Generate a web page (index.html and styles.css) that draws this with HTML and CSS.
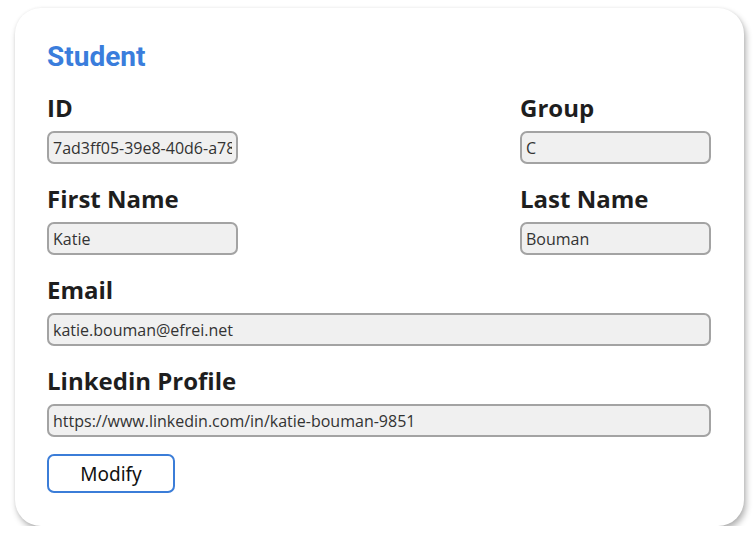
FILE: index.html
```html
<!DOCTYPE html>
<html>
<head>
<meta charset="utf-8">
<link rel="stylesheet" href="styles.css">
</head>
<body>
<div class="card">
  <h1 class="title">Student</h1>
  <div class="row">
    <div class="field">
      <label class="label">ID</label>
      <input class="input small" type="text" value="7ad3ff05-39e8-40d6-a78b-2c1f4e9d0a17" readonly>
    </div>
    <div class="field">
      <label class="label">Group</label>
      <input class="input small" type="text" value="C" readonly>
    </div>
  </div>
  <div class="row">
    <div class="field">
      <label class="label">First Name</label>
      <input class="input small" type="text" value="Katie" readonly>
    </div>
    <div class="field">
      <label class="label">Last Name</label>
      <input class="input small" type="text" value="Bouman" readonly>
    </div>
  </div>
  <div class="field">
    <label class="label">Email</label>
    <input class="input" type="text" value="katie.bouman@efrei.net" readonly>
  </div>
  <div class="field">
    <label class="label">Linkedin Profile</label>
    <input class="input" type="text" value="https://www.linkedin.com/in/katie-bouman-9851" readonly>
  </div>
  <button class="btn" type="button">Modify</button>
</div>
</body>
</html>
```
FILE: styles.css
```css
* { box-sizing: border-box; }
html, body { margin: 0; padding: 0; background: #ffffff; }
body { padding: 8px 0 0 15px; }
.card {
  width: 729px;
  height: 518px;
  background: #ffffff;
  border-radius: 26px;
  box-shadow: 2px 4px 6px rgba(0,0,0,0.3), 0 0 3px rgba(0,0,0,0.06);
  padding: 33px 33px 33px 32px;
  display: flex;
  flex-direction: column;
  gap: 18px;
}
.title {
  margin: 0;
  font-family: Roboto, "Liberation Sans", sans-serif;
  font-weight: 700;
  font-size: 28px;
  line-height: 32px;
  color: #3a7ddc;
}
.row {
  display: flex;
  justify-content: space-between;
}
.field {
  display: flex;
  flex-direction: column;
}
.label {
  font-family: "Open Sans", "Noto Sans", sans-serif;
  font-weight: 700;
  font-size: 24px;
  line-height: 33px;
  color: #1e1e1e;
  margin-bottom: 7px;
}
.input {
  width: 664px;
  height: 33px;
  border: 2px solid #a3a3a3;
  border-radius: 7px;
  background: #f0f0f0;
  padding: 0 4px;
  font-family: "Open Sans", "Noto Sans", sans-serif;
  font-size: 16px;
  color: #333333;
  outline: none;
}
.input.small { width: 191px; }
.btn {
  width: 128px;
  height: 39px;
  margin-top: -1px;
  border: 2px solid #3b7dd8;
  border-radius: 7px;
  background: #ffffff;
  font-family: "Noto Sans", "Open Sans", sans-serif;
  font-size: 19px;
  color: #111111;
  padding: 0;
}
```
